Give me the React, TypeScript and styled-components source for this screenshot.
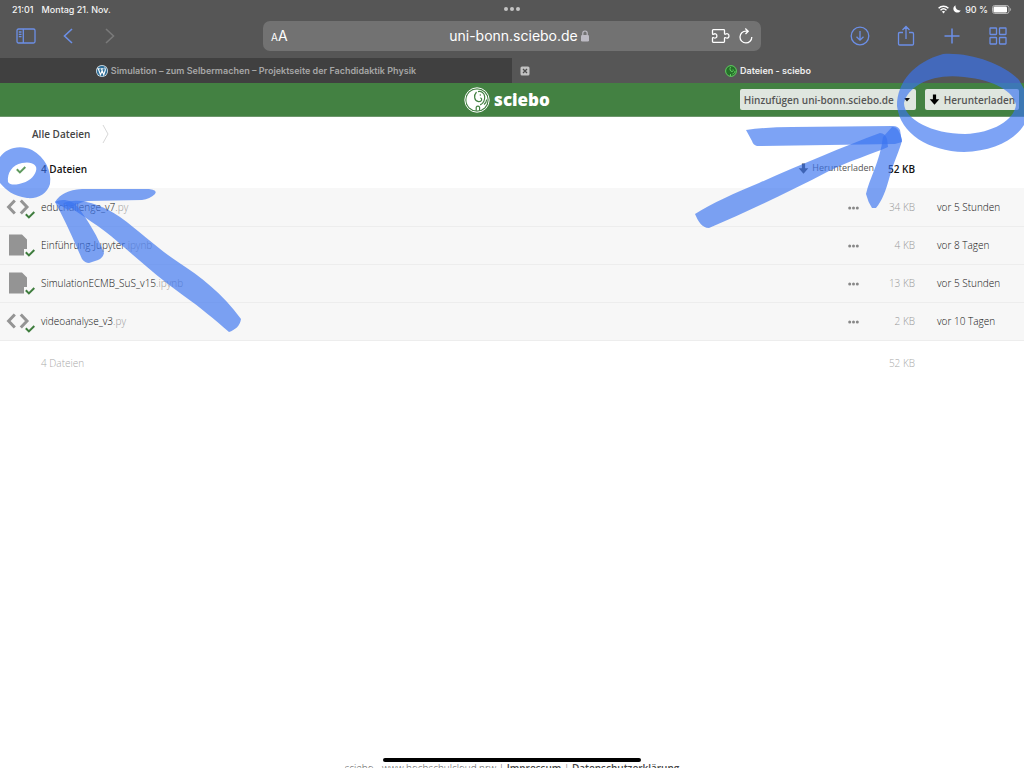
import React from "react";
import styled, { createGlobalStyle } from "styled-components";

const GlobalStyle = createGlobalStyle`
  *, *::before, *::after { box-sizing: border-box; }
  html, body { margin: 0; padding: 0; height: 100%; background: #fff; }
  #root { height: 100%; }
  button, input { font: inherit; color: inherit; }
  button { border: 0; background: none; padding: 0; cursor: pointer; }
  a { color: inherit; text-decoration: none; }
  svg { display: block; flex: none; }
`;

const Screen = styled.div`
  position: relative;
  display: flex;
  flex-direction: column;
  height: 100vh;
  overflow: hidden;
  background: #fff;
  font-family: "Open Sans", sans-serif;
`;

const Chrome = styled.header`
  background: #565656;
  color: #fff;
  font-family: Inter, sans-serif;
`;

const StatusBar = styled.div`
  display: grid;
  grid-template-columns: 1fr auto 1fr;
  align-items: center;
  height: 18px;
  padding: 0 12px;
  font-size: 9px;
  font-weight: 500;
  color: #f4f4f4;
`;

const StatusGroup = styled.div<{ $end?: boolean }>`
  display: flex;
  align-items: center;
  justify-content: ${(p) => (p.$end ? "flex-end" : "flex-start")};
  gap: ${(p) => (p.$end ? 4 : 8)}px;
`;

const Toolbar = styled.div`
  display: grid;
  grid-template-columns: 1fr minmax(0, 498px) 1fr;
  align-items: center;
  height: 40px;
  padding: 0 14px 4px;
`;

const ToolGroup = styled.nav<{ $end?: boolean }>`
  display: flex;
  justify-content: ${(p) => (p.$end ? "flex-end" : "flex-start")};
  gap: ${(p) => (p.$end ? 22 : 18)}px;
`;

const ToolButton = styled.button<{ $muted?: boolean }>`
  display: flex;
  align-items: center;
  justify-content: center;
  width: 24px;
  height: 24px;
  color: ${(p) => (p.$muted ? "#7a7a7a" : "#6c8fe6")};
`;

const AddressBar = styled.div`
  display: grid;
  grid-template-columns: 1fr auto 1fr;
  align-items: center;
  height: 30px;
  padding: 0 8px;
  border-radius: 7px;
  background: #727272;
`;

const TextSize = styled.button`
  justify-self: start;
  font-size: 14px;
  line-height: 20px;
  small { font-size: 10px; }
`;

const Address = styled.div`
  display: flex;
  align-items: center;
  gap: 3px;
  padding-left: 14px;
  font-size: 14px;
  line-height: 20px;
`;

const AddressTools = styled.div`
  display: flex;
  justify-content: flex-end;
  align-items: center;
  gap: 9px;
`;

const AddressButton = styled.button`
  display: flex;
`;

const Tabs = styled.nav`
  display: grid;
  grid-template-columns: 1fr 1fr;
  height: 25px;
`;

const Tab = styled.div<{ $active?: boolean }>`
  display: grid;
  grid-template-columns: 24px 1fr 24px;
  align-items: center;
  background: ${(p) => (p.$active ? "#565656" : "#404040")};
  color: ${(p) => (p.$active ? "#eee" : "#a6a6a6")};
  font-size: 9px;
  font-weight: 600;
`;

const TabLink = styled.a`
  grid-column: 2;
  display: flex;
  align-items: center;
  justify-content: center;
  gap: 3px;
  white-space: nowrap;
`;

const TabClose = styled.button`
  grid-column: 1;
  grid-row: 1;
  justify-self: end;
  padding-right: 6px;
`;

const SiteHeader = styled.header`
  display: grid;
  grid-template-columns: 1fr auto 1fr;
  align-items: center;
  flex: none;
  height: 34px;
  padding: 0 5px;
  background: #438142;
  border-bottom: 1px solid #6d966c;
`;

const Brand = styled.a`
  grid-column: 2;
  display: flex;
  align-items: center;
  gap: 4px;
  padding-right: 10px;
  color: #fff;
  font-size: 17px;
  font-weight: 800;
  line-height: 24px;
`;

const HeaderActions = styled.div`
  display: flex;
  justify-content: flex-end;
  gap: 9px;
`;

const SplitButton = styled.div`
  display: flex;
`;

const HeaderButton = styled.button<{ $side?: "left" | "right" }>`
  display: flex;
  align-items: center;
  gap: 4px;
  height: 21px;
  padding: ${(p) => (p.$side === "right" ? "0 6px" : "0 4px")};
  border-radius: ${(p) =>
    p.$side === "left" ? "2px 0 0 2px" : p.$side === "right" ? "0 2px 2px 0" : "2px"};
  background: #dfe6df;
  color: #555;
  font-size: 10px;
  font-weight: 600;
  white-space: nowrap;
`;

const Content = styled.main`
  flex: 1;
  min-height: 0;
`;

const Breadcrumb = styled.nav`
  display: flex;
  align-items: center;
  gap: 12px;
  height: 33px;
  padding-left: 32px;
  color: #444;
  font-size: 10px;
  font-weight: 600;
`;

const FileTable = styled.table`
  width: 100%;
  table-layout: fixed;
  border-collapse: collapse;
  font-size: 10px;
  line-height: 14px;
  th, td { padding: 0; text-align: left; white-space: nowrap; }
`;

const Col = styled.col<{ $w?: number }>`
  width: ${(p) => (p.$w ? `${p.$w}px` : "auto")};
`;

const HeadRow = styled.tr`
  height: 38px;
  color: #111;
  th { font-weight: 600; }
`;

const FileRow = styled.tr`
  height: 38px;
  background: #f7f7f7;
  border-bottom: 1px solid #ededed;
  color: #111;
  font-weight: 300;
`;

const SummaryRow = styled.tr`
  height: 46px;
  color: #aaa;
  td { font-weight: 300; }
`;

const FileName = styled.a`
  span { color: #999; }
`;

const RightCell = styled.td`
  && { text-align: right; }
`;

const SizeCell = styled(RightCell)`
  color: #999;
`;

const DateCell = styled.td`
  && { padding-left: 22px; }
`;

const MoreButton = styled.button`
  margin-right: 15px;
  color: #888;
  svg { display: inline-block; vertical-align: middle; }
`;

const BulkDownload = styled.button`
  display: inline-flex;
  align-items: center;
  gap: 3px;
  color: #555;
  font-size: 9px;
  font-weight: 400;
`;

const Selector = styled.label<{ $head?: boolean }>`
  position: relative;
  display: block;
  width: 30px;
  height: 24px;
  margin-left: ${(p) => (p.$head ? 16 : 6)}px;
  padding-top: ${(p) => (p.$head ? 9 : 0)}px;
`;

const HiddenCheck = styled.input`
  position: absolute;
  inset: 0;
  width: 100%;
  height: 100%;
  margin: 0;
  opacity: 0;
`;

const CheckBadge = styled.span`
  position: absolute;
  right: 1px;
  bottom: 0;
`;

const SiteFooter = styled.footer`
  flex: none;
  height: 7px;
  text-align: center;
  font-size: 10px;
  font-weight: 300;
  line-height: 14px;
  color: #555;
  white-space: nowrap;
  a + a { color: #444; font-weight: 600; }
`;

const HomeIndicator = styled.div`
  position: absolute;
  bottom: 6px;
  left: 50%;
  width: 258px;
  height: 4px;
  margin-left: -129px;
  border-radius: 2px;
  background: #000;
`;

const Marker = styled.svg<{ $side: "left" | "right" }>`
  position: absolute;
  top: 0;
  ${(p) => p.$side}: 0;
  pointer-events: none;
  fill: #3a74f0;
  fill-opacity: 0.66;
`;

const Check = ({ color = "#3f7d3e" }: { color?: string }) => (
  <svg width="10" height="8" viewBox="0 0 10 8" fill="none" stroke={color} strokeWidth="2">
    <path d="M.8 3.200 3.900 6.400 9.300 1" />
  </svg>
);

const DownArrow = ({ color }: { color: string }) => (
  <svg width="11" height="11" viewBox="0 0 11 11" fill={color}>
    <path d="M3.900 0.500h3.200v4.800h3.200L5.500 10.800 0.700 5.300h3.200z" />
  </svg>
);

const CodeIcon = () => (
  <svg width="24" height="24" viewBox="0 0 24 24" fill="none" stroke="#949494" strokeWidth="3">
    <path d="M8.800 5.500 2.600 12l6.200 6.500M14.800 5.500 21 12l-6.200 6.500" />
  </svg>
);

const DocIcon = () => (
  <svg width="24" height="24" viewBox="0 0 24 24" fill="#949494">
    <path d="M3 1.500h13l5 5V16h-3v6.500H3z" />
  </svg>
);

const Elephant = () => (
  <svg width="26" height="26" viewBox="0 0 26 26" fill="none">
    <circle cx="13" cy="13" r="12.200" stroke="#fff" strokeWidth="1" />
    <circle cx="13" cy="13" r="10.600" fill="#fff" />
    <path
      d="M12.500 5C9.300 8.500 10.200 14 14.600 14.600c3.400.2 4-2.800 1.800-3.800M14 4.600c3.200-.7 6.400 1.400 6.700 5 .2 3.700-1.400 6.700-4.500 8.300M20 17.500c1.600-1.200 2.500-2.800 2.700-5M12.200 23.800v-3.500c.8-1.500 2.700-1.500 3.400 0v3.500"
      stroke="#438142"
      strokeWidth="1.200"
    />
    <circle cx="16.300" cy="8" r=".7" fill="#438142" />
  </svg>
);

const WordPressIcon = () => (
  <svg width="12" height="12" viewBox="0 0 24 24">
    <circle cx="12" cy="12" r="12" fill="#dbe6ee" />
    <circle cx="12" cy="12" r="10.500" fill="#2f6f99" />
    <path
      d="M2.500 7.500h5M9 7.500h6M4.500 7.500 9 19.500l3.500-9M11 7.500l4.500 12 3-9c.8-2.500-1.500-3.500-.5-5.500"
      fill="none"
      stroke="#fff"
      strokeWidth="2.200"
    />
  </svg>
);

const ScieboIcon = () => (
  <svg width="12" height="12" viewBox="0 0 24 24" fill="none" stroke="#5fce5f" strokeWidth="2">
    <circle cx="12" cy="12" r="10.800" fill="#26702a" />
    <path d="M11 4c-2 4-1 9 3 9 2.500 0 3-2 2-4M20 12c0 4-2 5-5 6M11 22v-4" />
  </svg>
);

const files = [
  { name: "educhallenge_v7", ext: ".py", size: "34 KB", date: "vor 5 Stunden", code: true },
  { name: "Einführung-Jupyter", ext: ".ipynb", size: "4 KB", date: "vor 8 Tagen", code: false },
  { name: "SimulationECMB_SuS_v15", ext: ".ipynb", size: "13 KB", date: "vor 5 Stunden", code: false },
  { name: "videoanalyse_v3", ext: ".py", size: "2 KB", date: "vor 10 Tagen", code: true },
];

const BrowserChrome = () => (
  <Chrome>
    <StatusBar>
      <StatusGroup>
        <span>21:01</span>
        <span>Montag 21. Nov.</span>
      </StatusGroup>
      <svg width="16" height="4" viewBox="0 0 16 4" fill="#c4c4c4">
        <circle cx="2" cy="2" r="2" />
        <circle cx="8" cy="2" r="2" />
        <circle cx="14" cy="2" r="2" />
      </svg>
      <StatusGroup $end>
        <svg width="11" height="9" viewBox="0 0 11 9" fill="none" stroke="#fff" strokeWidth="1.500">
          <path d="M.6 3.200c2.800-2.700 7-2.700 9.800 0M2.500 5.200c1.700-1.600 4.300-1.600 6 0" />
          <path d="M3.800 6.600 5.500 8.400l1.700-1.800c-1-.8-2.400-.8-3.400 0z" fill="#fff" stroke="none" />
        </svg>
        <svg width="8" height="8" viewBox="0 0 8 8" fill="#fff">
          <path d="M2.600.3C1.900 3.300 4.200 6 7.700 5.400 6.600 7.300 4.500 8.100 2.600 7.300-.4 6-.4 1.700 2.600.3z" />
        </svg>
        <span>90 %</span>
        <svg width="20" height="9" viewBox="0 0 20 9">
          <rect x=".5" y=".5" width="16.500" height="8" rx="2.200" fill="none" stroke="#b5b5b5" />
          <rect x="1.500" y="1.500" width="13.500" height="6" rx="1.200" fill="#fff" />
          <path d="M18.200 3v3c1.200-.4 1.200-2.600 0-3z" fill="#b5b5b5" />
        </svg>
      </StatusGroup>
    </StatusBar>
    <Toolbar>
      <ToolGroup aria-label="Navigation">
        <ToolButton aria-label="Seitenleiste">
          <svg width="20" height="16" viewBox="0 0 20 16" fill="none" stroke="currentColor" strokeWidth="1.300">
            <rect x="1" y="1" width="18" height="14" rx="1.500" />
            <path d="M7.300 1v14M2.800 4h2.700M2.800 6.300h2.700M2.800 8.600h2.700" />
          </svg>
        </ToolButton>
        <ToolButton aria-label="Zurück">
          <svg width="10" height="16" viewBox="0 0 10 16" fill="none" stroke="currentColor" strokeWidth="1.600">
            <path d="M9 1 1.500 8 9 15" />
          </svg>
        </ToolButton>
        <ToolButton $muted aria-label="Vorwärts">
          <svg width="10" height="16" viewBox="0 0 10 16" fill="none" stroke="currentColor" strokeWidth="1.600">
            <path d="M1 1 8.500 8 1 15" />
          </svg>
        </ToolButton>
      </ToolGroup>
      <AddressBar>
        <TextSize aria-label="Textgröße">
          <small>A</small>A
        </TextSize>
        <Address>
          <span>uni-bonn.sciebo.de</span>
          <svg width="8" height="12" viewBox="0 0 8 12">
            <rect y="5" width="8" height="6.500" rx="1.200" fill="#bdbbc4" />
            <path d="M1.800 5.500V3.200a2.200 2.200 0 0 1 4.400 0v2.300" fill="none" stroke="#bdbbc4" strokeWidth="1.200" />
          </svg>
        </Address>
        <AddressTools>
          <AddressButton aria-label="Erweiterungen">
            <svg width="19" height="16" viewBox="0 0 19 16" fill="none" stroke="#fff" strokeWidth="1.300" strokeLinejoin="round">
              <path d="M1.500 5.500V2.500q0-.8.800-.8h10.400q.8 0 .8.800v3c0 .9.700.9 1.300.5 1.600-.9 3.200.2 3.200 1.900s-1.600 2.800-3.200 1.900c-.6-.4-1.300-.4-1.300.5v3.200q0 .8-.8.800H2.300q-.8 0-.8-.8v-3.200c0-.9.500-1 1.200-.6 1.700.9 3.200-.1 3.200-1.800S4.400 5.200 2.700 6.100c-.7.400-1.200.300-1.200-.6z" />
            </svg>
          </AddressButton>
          <AddressButton aria-label="Neu laden">
            <svg width="14" height="16" viewBox="0 0 14 16" fill="none" stroke="#fff" strokeWidth="1.300">
              <path d="M12.800 9A5.900 5.900 0 1 1 7 3.100h2M6.300.6 9.200 3.200 6.500 6" />
            </svg>
          </AddressButton>
        </AddressTools>
      </AddressBar>
      <ToolGroup $end aria-label="Aktionen">
        <ToolButton aria-label="Downloads">
          <svg width="20" height="20" viewBox="0 0 20 20" fill="none" stroke="currentColor" strokeWidth="1.300">
            <circle cx="10" cy="10" r="8.800" />
            <path d="M10 5v9M6.500 10.700 10 14.200l3.500-3.500" />
          </svg>
        </ToolButton>
        <ToolButton aria-label="Teilen">
          <svg width="18" height="22" viewBox="0 0 18 22" fill="none" stroke="currentColor" strokeWidth="1.300">
            <path d="M6 7.500H2.700c-.8 0-1.200.4-1.200 1.200v10.100c0 .8.400 1.200 1.200 1.200h12.600c.8 0 1.200-.4 1.200-1.200V8.700c0-.8-.4-1.200-1.200-1.200H12M9 14V1.500M5.500 5 9 1.500 12.500 5" />
          </svg>
        </ToolButton>
        <ToolButton aria-label="Neuer Tab">
          <svg width="16" height="16" viewBox="0 0 16 16" fill="none" stroke="currentColor" strokeWidth="1.500">
            <path d="M8 .5v15M.5 8h15" />
          </svg>
        </ToolButton>
        <ToolButton aria-label="Tabübersicht">
          <svg width="18" height="18" viewBox="0 0 18 18" fill="none" stroke="currentColor" strokeWidth="1.300">
            <rect x="1" y="1" width="6.500" height="6.500" rx=".5" />
            <rect x="10.500" y="1" width="6.500" height="6.500" rx=".5" />
            <rect x="1" y="10.500" width="6.500" height="6.500" rx=".5" />
            <rect x="10.500" y="10.500" width="6.500" height="6.500" rx=".5" />
          </svg>
        </ToolButton>
      </ToolGroup>
    </Toolbar>
    <Tabs aria-label="Tabs">
      <Tab>
        <TabLink href="#physik">
          <WordPressIcon />
          Simulation – zum Selbermachen – Projektseite der Fachdidaktik Physik
        </TabLink>
      </Tab>
      <Tab $active>
        <TabClose aria-label="Tab schließen">
          <svg width="10" height="10" viewBox="0 0 10 10">
            <rect x=".5" y=".5" width="9" height="9" rx="1.500" fill="#c2c2c2" />
            <path d="m3 3 4 4M7 3 3 7" stroke="#4c4c4c" strokeWidth="1.300" />
          </svg>
        </TabClose>
        <TabLink href="#dateien">
          <ScieboIcon />
          Dateien - sciebo
        </TabLink>
      </Tab>
    </Tabs>
  </Chrome>
);

export default function App() {
  return (
    <Screen>
      <GlobalStyle />
      <BrowserChrome />
      <SiteHeader>
        <Brand href="#start">
          <Elephant />
          sciebo
        </Brand>
        <HeaderActions>
          <SplitButton>
            <HeaderButton $side="left">Hinzufügen uni-bonn.sciebo.de</HeaderButton>
            <HeaderButton $side="right" aria-label="Weitere Optionen">
              <svg width="6" height="4" viewBox="0 0 6 4">
                <path d="M0 0h6L3 3.500z" fill="#111" />
              </svg>
            </HeaderButton>
          </SplitButton>
          <HeaderButton>
            <DownArrow color="#000" />
            Herunterladen
          </HeaderButton>
        </HeaderActions>
      </SiteHeader>
      <Content>
        <Breadcrumb aria-label="Pfad">
          <a href="#alle">Alle Dateien</a>
          <svg width="7" height="20" viewBox="0 0 7 20" fill="none" stroke="#d8d8d8">
            <path d="M1 1 6 10 1 19" />
          </svg>
        </Breadcrumb>
        <FileTable>
          <colgroup>
            <Col $w={41} />
            <Col />
            <Col $w={134} />
            <Col $w={41} />
            <Col $w={109} />
          </colgroup>
          <thead>
            <HeadRow>
              <th>
                <Selector $head>
                  <HiddenCheck type="checkbox" defaultChecked aria-label="Alle auswählen" />
                  <Check color="#5f9a5e" />
                </Selector>
              </th>
              <th>4 Dateien</th>
              <RightCell as="th">
                <BulkDownload>
                  <DownArrow color="#444" />
                  Herunterladen
                </BulkDownload>
              </RightCell>
              <RightCell as="th">52 KB</RightCell>
              <th />
            </HeadRow>
          </thead>
          <tbody>
            {files.map((file) => (
              <FileRow key={file.name}>
                <td>
                  <Selector>
                    <HiddenCheck type="checkbox" defaultChecked aria-label={file.name} />
                    {file.code ? <CodeIcon /> : <DocIcon />}
                    <CheckBadge>
                      <Check />
                    </CheckBadge>
                  </Selector>
                </td>
                <td>
                  <FileName href="#datei">
                    {file.name}
                    <span>{file.ext}</span>
                  </FileName>
                </td>
                <RightCell>
                  <MoreButton aria-label="Aktionen">
                    <svg width="11" height="4" viewBox="0 0 11 4" fill="currentColor">
                      <circle cx="1.700" cy="2" r="1.500" />
                      <circle cx="5.500" cy="2" r="1.500" />
                      <circle cx="9.300" cy="2" r="1.500" />
                    </svg>
                  </MoreButton>
                </RightCell>
                <SizeCell>{file.size}</SizeCell>
                <DateCell>{file.date}</DateCell>
              </FileRow>
            ))}
          </tbody>
          <tfoot>
            <SummaryRow>
              <td />
              <td>4 Dateien</td>
              <td />
              <RightCell>52 KB</RightCell>
              <td />
            </SummaryRow>
          </tfoot>
        </FileTable>
      </Content>
      <SiteFooter>
        <a href="#start">sciebo - www.hochschulcloud.nrw</a> | <a href="#impressum">Impressum</a> |{" "}
        <a href="#datenschutz">Datenschutzerklärung</a>
      </SiteFooter>
      <HomeIndicator />
      <Marker $side="left" width="250" height="340" viewBox="0 0 250 340" aria-hidden="true">
        <path
          fillRule="evenodd"
          d="M0 157C6 148 20 144 32 150 45 157 52 171 50 184 47 194 38 199 27 198 13 196 6 190 0 183zM8 182C7 173 12 165 22 163 32 161 38 165 36 171 34 177 29 182 19 184 14 185 10 185 8 182z"
        />
        <path d="M55 202C60 194 68 190 82 189L149 189Q158 190 155 194 150 199 142 200L88 201Q76 203 68 210z" />
        <path d="M55 202C62 198 72 200 78 207 89 222 98 237 104 253Q103 258 98 260L89 263Q85 263 82 259C75 243 66 222 55 202z" />
        <path d="M64 203C78 197 101 204 120 217 142 233 158 249 178 262 201 277 222 293 241 319 240 326 235 330 229 332 214 319 201 308 184 296 160 279 140 261 118 242 100 226 82 216 64 203z" />
      </Marker>
      <Marker $side="right" width="340" height="240" viewBox="684 0 340 240" aria-hidden="true">
        <path
          fillRule="evenodd"
          d="M897 106C897 82 914 62 943 54 970 52 1004 64 1019 80L1024 89V125C1013 142 991 151 964 152 929 151 900 134 897 106zM904 103C904 119 932 134 965 134 993 133 1014 120 1016 105 1014 92 995 80 964 77 932 73 908 86 904 103z"
        />
        <path d="M746 130Q768 127 792 127L893 126Q898 126 900 130L902 142 895 144 757 146Q753 145 752 141z" />
        <path d="M695 214C712 203 735 193 759 183 800 165 842 147 880 133Q885 133 887 139L888 147C872 154 849 161 829 171 789 192 749 211 709 228 702 228 698 221 695 214z" />
        <path d="M883 137L892 127Q899 126 902 140C900 150 893 163 889 179 886 190 882 201 876 208L872 208Q868 202 866 194C869 179 880 162 883 137z" />
      </Marker>
    </Screen>
  );
}
